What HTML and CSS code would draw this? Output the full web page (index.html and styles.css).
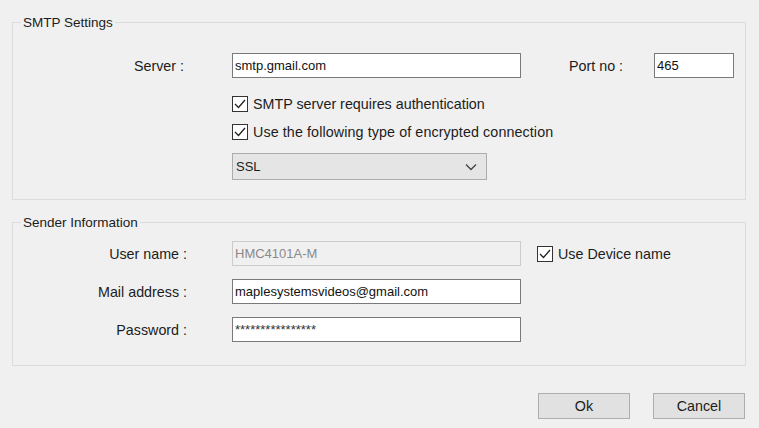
FILE: index.html
```html
<!DOCTYPE html>
<html>
<head>
<meta charset="utf-8">
<link rel="stylesheet" href="styles.css">
</head>
<body>
<div class="dialog">
  <fieldset class="group smtp">
    <legend>SMTP Settings</legend>
    <div class="row server-row">
      <span class="label">Server :</span>
      <input class="field wide" type="text" value="smtp.gmail.com" readonly>
      <span class="port-label">Port no :</span>
      <input class="field port" type="text" value="465" readonly>
    </div>
    <div class="row check-row first-check">
      <span class="check"><svg width="16" height="16" viewBox="0 0 16 16"><rect x="0.5" y="0.5" width="15" height="15" fill="#fff" stroke="#333"/><polyline points="3,8 6.5,11.5 13,4" fill="none" stroke="#222" stroke-width="1.3"/></svg></span>
      <span class="check-text">SMTP server requires authentication</span>
    </div>
    <div class="row check-row second-check">
      <span class="check"><svg width="16" height="16" viewBox="0 0 16 16"><rect x="0.5" y="0.5" width="15" height="15" fill="#fff" stroke="#333"/><polyline points="3,8 6.5,11.5 13,4" fill="none" stroke="#222" stroke-width="1.3"/></svg></span>
      <span class="check-text wide-text">Use the following type of encrypted connection</span>
    </div>
    <div class="row select-row">
      <div class="select">
        <span>SSL</span>
        <svg width="12" height="8" viewBox="0 0 12 8"><polyline points="1,1.5 6,6.5 11,1.5" fill="none" stroke="#444" stroke-width="1.3"/></svg>
      </div>
    </div>
  </fieldset>

  <fieldset class="group sender">
    <legend>Sender Information</legend>
    <div class="row">
      <span class="label label2">User name :</span>
      <input class="field wide disabled" type="text" value="HMC4101A-M" readonly>
      <span class="check device-check"><svg width="16" height="16" viewBox="0 0 16 16"><rect x="0.5" y="0.5" width="15" height="15" fill="#fff" stroke="#333"/><polyline points="3,8 6.5,11.5 13,4" fill="none" stroke="#222" stroke-width="1.3"/></svg></span>
      <span class="check-text">Use Device name</span>
    </div>
    <div class="row">
      <span class="label label2">Mail address :</span>
      <input class="field wide" type="text" value="maplesystemsvideos@gmail.com" readonly>
    </div>
    <div class="row">
      <span class="label label2">Password :</span>
      <input class="field wide pw" type="text" value="****************" readonly>
    </div>
  </fieldset>

  <div class="buttons">
    <button class="btn">Ok</button>
    <button class="btn">Cancel</button>
  </div>
</div>
</body>
</html>
```

FILE: styles.css
```css
html, body {
  margin: 0;
  padding: 0;
  background: #f0f0f0;
}
body {
  font-family: "Liberation Sans", Arial, sans-serif;
  font-size: 14.3px;
  color: #1c1c1c;
  width: 759px;
  height: 428px;
  overflow: hidden;
}
.dialog {
  padding: 15px 13px 0 12px;
}
.group {
  margin: 0;
  border: 1px solid #dcdcdc;
  padding: 0;
}
.group legend {
  margin-left: 8px;
  padding: 0 2px;
  line-height: 15px;
  font-size: 13.5px;
}
.smtp {
  padding-top: 23px;
  padding-bottom: 19px;
}
.sender {
  margin-top: 15px;
  padding-top: 11px;
  padding-bottom: 23px;
}
.row {
  display: flex;
  align-items: center;
}
.label {
  width: 171px;
  text-align: right;
  flex: none;
}
.label2 {
  width: 174px;
}
.field {
  box-sizing: border-box;
  height: 25px;
  border: 1px solid #7a7a7a;
  background: #fff;
  font-family: "Liberation Sans", Arial, sans-serif;
  font-size: 13px;
  color: #111;
  padding: 0 2px;
  margin: 0;
  outline: none;
}
.wide {
  width: 289px;
  margin-left: 48px;
}
.label2 + .wide {
  margin-left: 45px;
}
.disabled {
  background: #f0f0f0;
  border-color: #cccccc;
  color: #8a8a8a;
}
.pw {
  font-size: 13px;
  color: #333;
}
.port-label {
  margin-left: 48px;
  width: 85px;
  flex: none;
}
.port {
  width: 80px;
  height: 25px;
}
.check-row {
  margin-left: 219px;
  height: 17px;
}
.first-check {
  margin-top: 17px;
}
.second-check {
  margin-top: 11px;
}
.check {
  display: flex;
  width: 16px;
  height: 16px;
  flex: none;
}
.check-text {
  margin-left: 5px;
}
.wide-text {
  letter-spacing: 0.1px;
}
.select-row {
  margin-left: 219px;
  margin-top: 13px;
}
.select {
  box-sizing: border-box;
  width: 255px;
  height: 27px;
  border: 1px solid #acacac;
  background: #e5e5e5;
  display: flex;
  align-items: center;
  justify-content: space-between;
  padding: 0 9px 0 3px;
  font-size: 13px;
}
.sender .row + .row {
  margin-top: 13px;
}
.device-check {
  margin-left: 16px;
}
.buttons {
  display: flex;
  justify-content: flex-end;
  gap: 23px;
  margin-top: 27px;
  padding-right: 1px;
}
.btn {
  box-sizing: border-box;
  width: 92px;
  height: 26px;
  border: 1px solid #adadad;
  background: #e1e1e1;
  font-family: "Liberation Sans", Arial, sans-serif;
  font-size: 14.3px;
  color: #1c1c1c;
  padding: 0;
  margin: 0;
}
```
